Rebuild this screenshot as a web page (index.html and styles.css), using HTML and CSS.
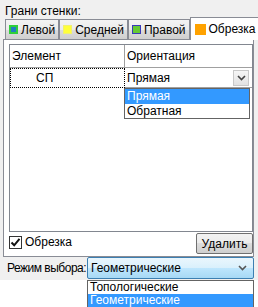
FILE: index.html
```html
<!DOCTYPE html>
<html lang="ru">
<head>
    <meta charset="UTF-8">
    <title>Грани стенки</title>
    <link rel="stylesheet" href="styles.css">
</head>
<body>

    <div class="panel">
        <div class="caption">Грани стенки:</div>

        <!-- вкладки -->
        <div class="tabs">
            <div class="tab"><span class="swatch sw-left"></span>Левой</div>
            <div class="tab"><span class="swatch sw-mid"></span>Средней</div>
            <div class="tab"><span class="swatch sw-right"></span>Правой</div>
            <div class="tab active"><span class="swatch sw-trim"></span>Обрезка</div>
        </div>

        <div class="page">
            <div class="grid">
                <div class="grid-head">
                    <div class="col1">Элемент</div>
                    <div class="col2">Ориентация</div>
                </div>
                <div class="grid-row">
                    <div class="col1 cell-focus">СП</div>
                    <div class="col2 cell-combo">
                        <span>Прямая</span>
                        <span class="drop-btn">
                            <svg width="9" height="6" viewBox="0 0 9 6"><path d="M1 1 L4.5 4.5 L8 1" fill="none" stroke="#444" stroke-width="1.6"/></svg>
                        </span>
                    </div>
                </div>
                <!-- открытый список ориентации -->
                <div class="droplist list-orient">
                    <div class="item selected">Прямая</div>
                    <div class="item">Обратная</div>
                </div>
            </div>

            <div class="page-foot">
                <label class="check">
                    <span class="box">
                        <svg width="11" height="11" viewBox="0 0 11 11"><path d="M1.5 5.5 L4.2 8.3 L9.5 1.8" fill="none" stroke="#111" stroke-width="2"/></svg>
                    </span>
                    Обрезка
                </label>
                <button class="btn">Удалить</button>
            </div>
        </div>

        <div class="mode-row">
            <span class="mode-label">Режим выбора:</span>
            <div class="combo">
                <span>Геометрические</span>
                <svg width="9" height="6" viewBox="0 0 9 6"><path d="M1 1 L4.5 4.5 L8 1" fill="none" stroke="#555" stroke-width="1.6"/></svg>
            </div>
        </div>
    </div>

    <!-- открытый список режима выбора (под панелью) -->
    <div class="list-mode">
        <div class="item">Топологические</div>
        <div class="item selected">Геометрические</div>
    </div>

</body>
</html>
```

FILE: styles.css
```css
/* --- общая разметка --- */
body {
    margin: 0;
    background: #ffffff;
    font-family: 'Liberation Sans', Arial, sans-serif;
    font-size: 12px;
    color: #000;
}

.panel {
    width: 258px;
    height: 280px;
    background: #f0f0f0;
}

.caption {
    padding: 4px 0 0 5px;
    height: 14px;
    line-height: 14px;
}

/* --- вкладки --- */
.tabs {
    display: flex;
    align-items: flex-end;
    height: 21px;
    padding-left: 5px;
    position: relative;
    z-index: 1;
}

.tab {
    display: flex;
    align-items: center;
    gap: 3px;
    height: 19px;
    padding: 0 3px 0 3px;
    border: 1px solid #898c95;
    border-bottom: none;
    background: linear-gradient(#f3f3f3, #ebebeb 50%, #dddddd 50%, #cfcfcf);
    margin-right: 1px;
    line-height: 18px;
}

.tab + .tab {
    margin-left: -1px;
}

.tab.active {
    height: 22px;
    background: #ffffff;
    padding: 0 6px 0 4px;
    margin-right: -10px;
    margin-bottom: -1px;
}

.swatch {
    width: 7px;
    height: 7px;
    border: 1px solid;
}

.sw-left {
    width: 5px;
    height: 5px;
    background: #1f7fbf;
    border: 2px solid #2fcf3a;
}

.sw-mid {
    background: #ffff3a;
    border-color: #f0f070;
}

.sw-right {
    background: #66c933;
    border-color: #3a3ab8;
}

.sw-trim {
    width: 9px;
    height: 9px;
    background: #ffa200;
    border-color: #ffa200;
}

/* --- страница вкладки --- */
.page {
    margin-left: 3px;
    width: 251px;
    height: 218px;
    border: 1px solid #898c95;
    background: #ffffff;
    padding: 4px 0 0 5px;
    box-sizing: border-box;
}

.grid {
    position: relative;
    width: 244px;
    height: 188px;
    border: 1px solid #828790;
    box-sizing: border-box;
    background: #ffffff;
}

.grid-head,
.grid-row {
    display: flex;
}

.grid-head {
    height: 22px;
    line-height: 22px;
    border-bottom: 1px solid #a0a0a0;
}

.grid-head .col1,
.grid-head .col2 {
    padding-left: 2px;
}

.col1 {
    width: 115px;
    border-right: 1px solid #a0a0a0;
    box-sizing: border-box;
}

.col2 {
    flex: 1;
}

.grid-row {
    height: 20px;
    line-height: 18px;
}

.cell-focus {
    border: 1px dotted #000;
    padding-left: 25px;
}

.cell-combo {
    display: flex;
    align-items: center;
    justify-content: space-between;
    padding-left: 2px;
    padding-right: 3px;
    border-bottom: 1px solid #a0a0a0;
}

.drop-btn {
    width: 14px;
    height: 14px;
    display: flex;
    align-items: center;
    justify-content: center;
    border: 1px solid #c8c8c8;
    background: linear-gradient(#f6f6f6, #e2e2e2);
}

/* --- выпадающие списки --- */
.droplist {
    position: absolute;
    background: #ffffff;
    border: 1px solid #646464;
    box-sizing: border-box;
    z-index: 2;
}

.item {
    height: 15px;
    line-height: 15px;
    padding-left: 2px;
}

.item.selected {
    background: #3399ff;
    color: #ffffff;
}

.list-orient {
    left: 114px;
    top: 43px;
    width: 126px;
    height: 31px;
}

.list-mode {
    margin-left: 87px;
    width: 167px;
    height: 27px;
    border: 1px solid #646464;
    border-bottom: none;
    background: #ffffff;
    box-sizing: border-box;
}

.list-mode .item {
    height: 13px;
    line-height: 13px;
}

.list-mode .item.selected {
    height: 14px;
}

/* --- низ страницы --- */
.page-foot {
    display: flex;
    justify-content: space-between;
    align-items: flex-start;
    width: 244px;
    padding-top: 1px;
}

.check {
    display: flex;
    align-items: center;
    gap: 3px;
    margin-top: 2px;
    line-height: 15px;
}

.box {
    width: 11px;
    height: 11px;
    border: 1px solid #333;
    background: #fff;
    display: flex;
}

.btn {
    font-family: inherit;
    font-size: 12px;
    width: 57px;
    height: 21px;
    padding: 0;
    border: 1px solid #707070;
    border-radius: 2px;
    background: linear-gradient(#f2f2f2, #ebebeb 50%, #dddddd 50%, #cfcfcf);
    color: #000;
}

/* --- режим выбора --- */
.mode-row {
    display: grid;
    grid-template-columns: 80px 167px;
    align-items: center;
    height: 22px;
    padding-left: 7px;
}

.mode-label {
    white-space: nowrap;
    letter-spacing: -0.5px;
}

.combo {
    height: 22px;
    border: 1px solid #3c7fb1;
    box-sizing: border-box;
    border-radius: 2px;
    background: linear-gradient(#eaf6fd, #d9f0fc 50%, #bee6fd 50%, #a7d9f5);
    display: flex;
    align-items: center;
    justify-content: space-between;
    padding: 0 6px 0 3px;
}
```
